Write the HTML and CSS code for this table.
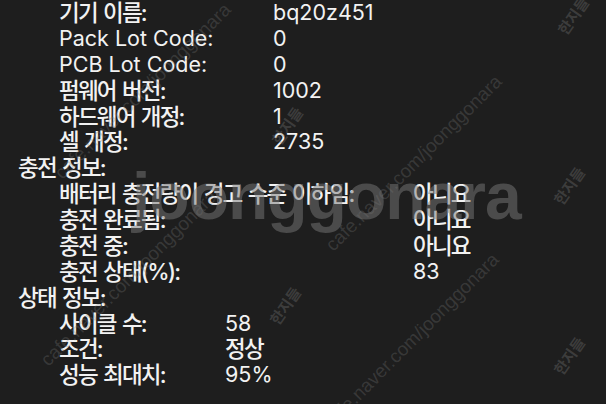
FILE: index.html
```html
<!DOCTYPE html>
<html lang="ko">
<head>
<meta charset="utf-8">
<link rel="stylesheet" href="styles.css">
</head>
<body>
<div class="screen">
  <div class="group g1">
    <span class="label ko">기기 이름:</span><span class="value">bq20z451</span>
    <span class="label">Pack Lot Code:</span><span class="value">0</span>
    <span class="label">PCB Lot Code:</span><span class="value">0</span>
    <span class="label ko">펌웨어 버전:</span><span class="value">1002</span>
    <span class="label ko">하드웨어 개정:</span><span class="value">1</span>
    <span class="label ko">셀 개정:</span><span class="value">2735</span>
  </div>
  <div class="header ko">충전 정보:</div>
  <div class="group g2">
    <span class="label ko">배터리 충전량이 경고 수준 이하임:</span><span class="value ko">아니요</span>
    <span class="label ko">충전 완료됨:</span><span class="value ko">아니요</span>
    <span class="label ko">충전 중:</span><span class="value ko">아니요</span>
    <span class="label ko">충전 상태(%):</span><span class="value">83</span>
  </div>
  <div class="header ko">상태 정보:</div>
  <div class="group g3">
    <span class="label ko">사이클 수:</span><span class="value">58</span>
    <span class="label ko">조건:</span><span class="value ko">정상</span>
    <span class="label ko">성능 최대치:</span><span class="value">95%</span>
  </div>

  <div class="wm wm-big">joonggonara</div>
  <div class="wm wm-diag d1">cafe.naver.com/joonggonara</div>
  <div class="wm wm-diag d2">cafe.naver.com/joonggonara</div>
  <div class="wm wm-diag d3">cafe.naver.com/joonggonara</div>
  <div class="wm wm-diag d4">cafe.naver.com/joonggonara</div>
  <div class="wm wm-tag t1">한지들</div>
  <div class="wm wm-tag t2">한지들</div>
  <div class="wm wm-tag t3">한지들</div>
  <div class="wm wm-tag t4">한지들</div>
  <div class="wm wm-tag t5">한지들</div>
</div>
</body>
</html>
```

FILE: styles.css
```css
html, body {
  margin: 0;
  padding: 0;
  background: #1e1e1e;
}

.screen {
  position: relative;
  width: 606px;
  height: 404px;
  overflow: hidden;
  background: #1e1e1e;
  color: #f2f2f2;
  font-family: "Inter", "Noto Sans CJK KR", sans-serif;
  font-size: 21.5px;
  line-height: 25.87px;
  padding-top: 0;
}

.ko {
  font-size: 22.5px;
  font-weight: 500;
  letter-spacing: -1.8px;
  word-spacing: 2px;
}

.group {
  display: grid;
  padding-left: 59px;
}

.g1 { grid-template-columns: 214px auto; }
.g2 { grid-template-columns: 354px auto; }
.g3 { grid-template-columns: 166px auto; }

.label, .value {
  white-space: nowrap;
}

.header {
  padding-left: 18px;
}

.wm {
  position: absolute;
  white-space: nowrap;
  pointer-events: none;
  line-height: 1;
}

.wm-big {
  left: 132px;
  top: 163px;
  font-family: "Liberation Sans", sans-serif;
  font-weight: bold;
  font-size: 66px;
  letter-spacing: -1px;
  color: rgba(120, 120, 120, 0.5);
}

.wm-diag {
  font-family: "Liberation Sans", sans-serif;
  font-size: 19px;
  color: rgba(120, 120, 120, 0.3);
  transform-origin: 0 0;
  transform: rotate(-45deg);
}

.d1 { left: 51px; top: 169px; }
.d2 { left: 37px; top: 356px; }
.d3 { left: 322px; top: 241px; }
.d4 { left: 319px; top: 419px; }

.wm-tag {
  font-family: "Noto Sans CJK KR", sans-serif;
  font-size: 15px;
  font-weight: bold;
  color: rgba(120, 120, 120, 0.35);
  transform: rotate(-55deg);
}

.t1 { left: 552px; top: 8px; }
.t2 { left: 548px; top: 178px; }
.t3 { left: 548px; top: 348px; }
.t4 { left: 266px; top: 118px; }
.t5 { left: 264px; top: 298px; }
```
